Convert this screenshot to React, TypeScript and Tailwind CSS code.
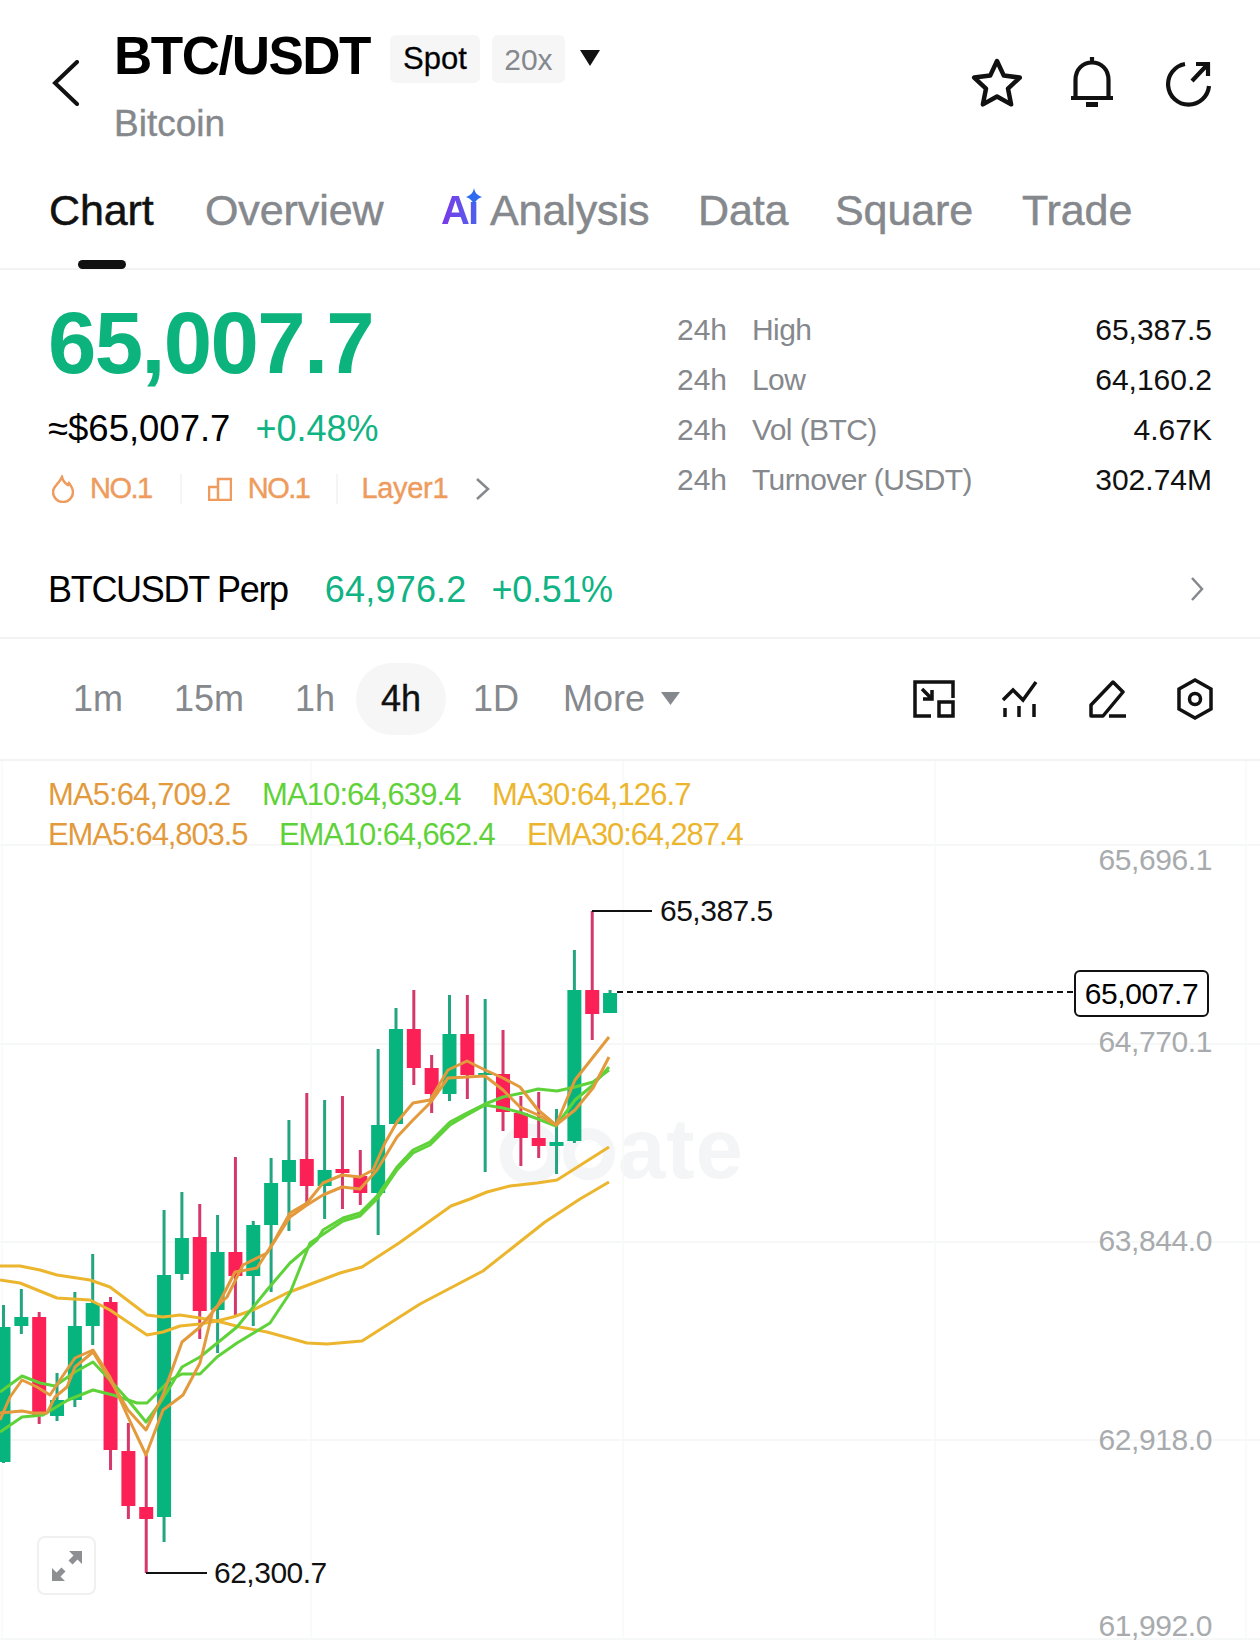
import React from 'react'

type Candle = [top: number, bottom: number, wickTop: number, wickBottom: number, up: boolean]

// body top, body bottom, wick top, wick bottom, green?
const CANDLES: Candle[] = [
  [1327, 1462, 1305, 1463, true],
  [1317, 1326, 1289, 1334, true],
  [1317, 1415, 1312, 1424, false],
  [1400, 1416, 1373, 1421, true],
  [1326, 1400, 1292, 1407, true],
  [1303, 1326, 1254, 1345, true],
  [1302, 1450, 1297, 1470, false],
  [1451, 1506, 1423, 1519, false],
  [1507, 1519, 1455, 1573, false],
  [1275, 1517, 1210, 1542, true],
  [1238, 1274, 1192, 1280, true],
  [1237, 1311, 1204, 1339, false],
  [1252, 1310, 1215, 1353, true],
  [1252, 1276, 1157, 1315, false],
  [1225, 1276, 1221, 1326, true],
  [1183, 1225, 1158, 1292, true],
  [1160, 1182, 1120, 1231, true],
  [1159, 1186, 1093, 1206, false],
  [1170, 1186, 1100, 1219, true],
  [1169, 1173, 1096, 1209, false],
  [1176, 1193, 1150, 1205, false],
  [1125, 1193, 1049, 1235, true],
  [1029, 1124, 1008, 1124, true],
  [1029, 1068, 990, 1085, false],
  [1068, 1094, 1055, 1113, false],
  [1034, 1094, 995, 1101, true],
  [1034, 1075, 995, 1099, false],
  [1073, 1075, 999, 1172, true],
  [1074, 1112, 1030, 1131, false],
  [1113, 1138, 1096, 1166, false],
  [1138, 1146, 1092, 1158, false],
  [1142, 1146, 1109, 1174, true],
  [990, 1141, 950, 1143, true],
  [990, 1014, 911, 1040, false],
  [993, 1013, 990, 1013, true],
]

const LINES: { color: string; points: string }[] = [
  {
    color: '#ecb52e',
    points:
      '0,1266 20,1266 40,1270 57,1275 90,1280 110,1287 147,1315 163,1317 180,1315 200,1318 217,1321 233,1317 253,1310 287,1293 340,1273 362,1267 399,1243 451,1206 470,1199 487,1192 510,1186 537,1183 557,1180 609,1147',
  },
  {
    color: '#ecb52e',
    points:
      '0,1280 20,1283 57,1298 90,1300 110,1310 147,1335 163,1332 180,1326 200,1324 217,1321 240,1327 267,1332 307,1343 327,1344 362,1341 420,1304 483,1271 545,1222 580,1199 609,1182',
  },
  {
    color: '#5fd23a',
    points:
      '0,1392 22,1376 40,1383 55,1386 75,1372 93,1362 110,1380 128,1400 146,1422 160,1403 170,1387 182,1367 200,1357 237,1327 267,1290 290,1263 317,1240 323,1230 343,1218 360,1213 378,1195 397,1167 413,1150 430,1142 450,1122 467,1113 485,1104 503,1097 522,1093 538,1089 557,1091 575,1087 593,1082 609,1070',
  },
  {
    color: '#5fd23a',
    points:
      '0,1432 22,1417 43,1415 68,1400 93,1390 113,1395 137,1403 147,1403 157,1393 170,1380 182,1374 200,1374 217,1357 237,1343 270,1323 290,1293 310,1243 325,1233 343,1221 360,1216 378,1198 397,1170 413,1153 430,1145 450,1125 467,1115 485,1105 503,1108 522,1113 538,1119 556,1126 575,1100 593,1085 609,1067',
  },
  {
    color: '#e39a3c',
    points:
      '0,1413 22,1411 33,1413 47,1413 55,1397 67,1387 75,1367 93,1352 110,1380 128,1410 146,1430 163,1395 182,1342 200,1327 217,1307 235,1272 257,1268 273,1243 290,1213 307,1203 323,1183 342,1175 360,1177 373,1170 385,1143 397,1122 413,1103 430,1100 448,1070 467,1061 485,1070 503,1078 520,1087 538,1110 556,1125 575,1080 609,1037',
  },
  {
    color: '#e39a3c',
    points:
      '0,1420 10,1397 22,1380 37,1387 50,1395 62,1377 75,1358 93,1350 110,1377 128,1417 146,1455 163,1410 183,1395 200,1363 213,1310 227,1297 243,1265 267,1253 290,1217 307,1205 323,1195 342,1187 360,1189 377,1170 397,1137 413,1120 430,1103 448,1078 467,1077 485,1076 503,1090 520,1107 538,1115 556,1125 575,1110 593,1088 609,1057',
  },
]

const GRID_Y = [845, 1044, 1242, 1440, 1639]
const GRID_X = [2, 311, 623, 935, 1246]
const CHART_TOP = 761

const PRICE_LABELS: [string, number][] = [
  ['65,696.1', 860],
  ['64,770.1', 1042],
  ['63,844.0', 1241],
  ['62,918.0', 1440],
  ['61,992.0', 1626],
]

const STATS = [
  ['High', '65,387.5'],
  ['Low', '64,160.2'],
  ['Vol (BTC)', '4.67K'],
  ['Turnover (USDT)', '302.74M'],
]

function ChartDrawing() {
  const shift = (points: string) =>
    points
      .split(' ')
      .map((p) => {
        const [x, y] = p.split(',').map(Number)
        return `${x},${y - CHART_TOP}`
      })
      .join(' ')

  return (
    <svg width="1260" height="884" className="absolute left-0 top-0">
      {GRID_Y.map((y) => (
        <line key={y} x1="0" x2="1260" y1={y - CHART_TOP} y2={y - CHART_TOP} stroke="#f3f4f5" strokeWidth="1.5" />
      ))}
      {GRID_X.map((x) => (
        <line key={x} x1={x} x2={x} y1="0" y2="878" stroke="#f7f8f8" strokeWidth="1.5" />
      ))}
      {/* watermark logo rings, the "ate" part is real text above */}
      <circle cx="530" cy={1154 - CHART_TOP} r="24" fill="none" stroke="#f4f5f6" strokeWidth="13" />
      <circle cx="589" cy={1154 - CHART_TOP} r="20" fill="none" stroke="#f4f5f6" strokeWidth="12" />
      {CANDLES.map(([top, bottom, wickTop, wickBottom, up], i) => {
        const x = 3.5 + i * 17.84
        return (
          <g key={i}>
            <rect x={x - 1.5} y={wickTop - CHART_TOP} width="3" height={wickBottom - wickTop} fill={up ? '#23a580' : '#d5386a'} />
            <rect x={x - 7} y={top - CHART_TOP} width="14" height={bottom - top} fill={up ? '#08b47d' : '#fb2157'} />
          </g>
        )
      })}
      {LINES.map((l, i) => (
        <polyline key={i} points={shift(l.points)} fill="none" stroke={l.color} strokeWidth="3" strokeLinejoin="round" />
      ))}
      {/* high / low leaders and current price */}
      <polyline points={`592,${911 - CHART_TOP} 652,${911 - CHART_TOP}`} fill="none" stroke="#111" strokeWidth="2" />
      <polyline points={`146,${1573 - CHART_TOP} 207,${1573 - CHART_TOP}`} fill="none" stroke="#111" strokeWidth="2" />
      <line x1="617" x2="1074" y1={992 - CHART_TOP} y2={992 - CHART_TOP} stroke="#111" strokeWidth="2" strokeDasharray="6 4" />
    </svg>
  )
}

export default function App() {
  return (
    <div className="w-[1260px] h-[1645px] bg-white overflow-hidden text-black font-['Liberation_Sans',Arial,sans-serif]">
      {/* Header */}
      <div className="flex h-[160px] pl-[52px] pr-[49px]">
        <svg width="28" height="46" viewBox="0 0 28 46" className="mt-[60px]" fill="none" stroke="#111" strokeWidth="4">
          <path d="M25 2 3 23l22 21" strokeLinecap="round" strokeLinejoin="miter" />
        </svg>
        <div className="ml-[34px] pt-[28px]">
          <div className="flex items-start">
            <span className="text-[53px] leading-[56px] font-bold tracking-[-1.5px]">BTC/USDT</span>
            <span className="ml-[20px] mt-[7px] h-[48px] w-[90px] flex items-center justify-center rounded-md bg-[#f6f6f7] text-[31px] [-webkit-text-stroke:0.3px_#111]">Spot</span>
            <span className="ml-[12px] mt-[7px] h-[48px] w-[73px] flex items-center justify-center rounded-md bg-[#f6f6f7] text-[30px] text-[#85888c]">20x</span>
            <svg width="20" height="16" viewBox="0 0 20 16" className="ml-[15px] mt-[22px]">
              <path d="M0 0h20L10 16z" fill="#111" />
            </svg>
          </div>
          <div className="mt-[21px] text-[37px] leading-[38px] text-[#85888c] [-webkit-text-stroke:0.4px_#85888c]">Bitcoin</div>
        </div>
        <div className="ml-auto mt-[58px] flex items-start">
          <svg width="52" height="50" viewBox="0 0 52 50" fill="none" stroke="#111" strokeWidth="4.5" strokeLinejoin="round" className="-ml-[1px]">
            <path d="M26 3l6.8 14.6 16 2-11.800 11 3.100 15.800L26 38.500 11.900 46.400 15 30.600 3.200 19.600l16-2z" />
          </svg>
          <svg width="44" height="52" viewBox="0 0 44 52" fill="none" stroke="#111" strokeWidth="4.2" className="ml-[47px] -mt-[2px]">
            <path d="M22 1v6M5.500 42V24C5.500 13 13 6.500 22 6.500S38.500 13 38.500 24v18M1 42h42" />
            <path d="M16 48.500h12" strokeWidth="5" />
          </svg>
          <svg width="46" height="46" viewBox="0 0 46 46" fill="none" stroke="#111" strokeWidth="4.2" className="ml-[51px] mt-[3px]">
            <path d="M20 3A20.500 20.500 0 1 0 44 25" />
            <path d="M27 20 43 3M31 3h12v12" />
          </svg>
        </div>
      </div>

      {/* Tabs */}
      <div className="flex h-[110px] items-start border-b-[2px] border-[#f2f3f4] pl-[49px] pt-[20px] text-[43px] leading-[60px] tracking-[-0.1px] text-[#85888c] [-webkit-text-stroke:0.5px_#85888c]">
        <div className="relative h-[80px] w-[156px] text-[#111] [-webkit-text-stroke:0.5px_#111]">
          Chart
          <div className="absolute left-[29px] top-[80px] h-[9px] w-[48px] rounded-full bg-[#111]" />
        </div>
        <div className="w-[236px]">Overview</div>
        <div className="relative w-[49px] text-[40px] font-bold tracking-[-2px] bg-gradient-to-r from-[#7a35e8] to-[#2f6bee] bg-clip-text text-transparent [-webkit-text-stroke:0px]">
          Aı
          <svg width="16" height="18" viewBox="0 0 16 18" className="absolute left-[25px] top-[8px]">
            <path d="M8 0c1 5 3 7 8 9-5 2-7 4-8 9-1-5-3-7-8-9 5-2 7-4 8-9z" fill="#2f6bee" />
          </svg>
        </div>
        <div className="w-[208px]">Analysis</div>
        <div className="w-[137px]">Data</div>
        <div className="w-[187px]">Square</div>
        <div>Trade</div>
      </div>

      {/* Price and 24h stats */}
      <div className="flex h-[260px] pl-[48px] pr-[48px]">
        <div className="w-[629px] pt-[28px]">
          <div className="text-[87px] leading-[90px] font-bold tracking-[-1.7px] text-[#0cb37c]">65,007.7</div>
          <div className="mt-[19px] flex text-[36.5px] leading-[44px]">
            <span>≈$65,007.7</span>
            <span className="ml-[25px] text-[36px] text-[#10b383]">+0.48%</span>
          </div>
          <div className="mt-[18px] flex h-[40px] items-center text-[29px] text-[#ee9b5d] [-webkit-text-stroke:0.4px_#ee9b5d]">
            <svg width="22" height="28" viewBox="0 0 22 28" fill="none" stroke="#ee9b5d" strokeWidth="2.500" className="ml-[4px]">
              <path d="M10 2c1 5 3 6 6 8l1-2c3 4 4 7 4 9a10 10 0 0 1-20 0c0-6 6-8 9-15z" />
            </svg>
            <span className="ml-[16px] tracking-[-1.5px]">NO.1</span>
            <div className="ml-[28px] h-[30px] w-[2px] bg-[#f5f5f5]" />
            <svg width="24" height="24" viewBox="0 0 24 24" fill="none" stroke="#ee9b5d" strokeWidth="2.500" className="ml-[26px]">
              <path d="M1 10h9v13H1zM10 2h13v21H10z" />
            </svg>
            <span className="ml-[16px] tracking-[-1.5px]">NO.1</span>
            <div className="ml-[27px] h-[30px] w-[2px] bg-[#f5f5f5]" />
            <span className="ml-[23px] tracking-[-0.3px]">Layer1</span>
            <svg width="15" height="24" viewBox="0 0 15 24" fill="none" stroke="#85888c" strokeWidth="2.500" className="ml-[27px]">
              <path d="M2 2l11 10L2 22" />
            </svg>
          </div>
        </div>
        <div className="flex-1 pt-[34px]">
          {STATS.map(([label, value]) => (
            <div key={label} className="flex h-[50px] items-center text-[30px]">
              <span className="w-[75px] text-[#85888c]">24h</span>
              <span className="tracking-[-0.6px] text-[#85888c]">{label}</span>
              <span className="ml-auto text-[#111]">{value}</span>
            </div>
          ))}
        </div>
      </div>

      {/* Perp row */}
      <div className="flex h-[109px] items-start border-b-[2px] border-[#f2f3f4] pl-[48px] pr-[56px] pt-[38px] text-[36px] leading-[44px]">
        <span className="tracking-[-1.3px]">BTCUSDT Perp</span>
        <span className="ml-[37px] tracking-[0.2px] text-[#10b383]">64,976.2</span>
        <span className="ml-[25px] tracking-[-0.3px] text-[#10b383]">+0.51%</span>
        <svg width="14" height="26" viewBox="0 0 14 26" fill="none" stroke="#85888c" strokeWidth="2.500" className="ml-auto mt-[8px]">
          <path d="M2 2l10 11L2 24" />
        </svg>
      </div>

      {/* Timeframes and tools */}
      <div className="flex h-[122px] items-start border-b-[2px] border-[#f2f3f4] pl-[73px] pr-[47px] pt-[24px] text-[36px] leading-[72px] text-[#85888c]">
        <span className="w-[101px]">1m</span>
        <span className="w-[121px]">15m</span>
        <span className="w-[61px]">1h</span>
        <span className="flex h-[72px] w-[90px] items-center justify-center rounded-full bg-[#f6f6f7] text-[#111] [-webkit-text-stroke:0.4px_#111]">4h</span>
        <span className="ml-[27px] w-[90px]">1D</span>
        <span>More</span>
        <svg width="19" height="13" viewBox="0 0 19 13" className="ml-[16px] mt-[29px]">
          <path d="M0 0h19L9.500 13z" fill="#85888c" />
        </svg>
        <div className="ml-auto flex mt-[17px] items-start">
          <svg width="42" height="38" viewBox="0 0 42 38" fill="none" stroke="#111" strokeWidth="3.500">
            <path d="M18 36H2V2h38v16" />
            <path d="M26 22h14v14H26zM9 9l10 10M19 10v9h-9" />
          </svg>
          <svg width="36" height="38" viewBox="0 0 36 38" fill="none" stroke="#111" strokeWidth="3.500" className="ml-[47px]">
            <path d="M1 20l10-10 10 10L34 2M3 28v9M17 26v11M32 24v13" />
          </svg>
          <svg width="38" height="38" viewBox="0 0 38 38" fill="none" stroke="#111" strokeWidth="3.500" strokeLinejoin="round" className="ml-[51px]">
            <path d="M24 2l10 10-20 24H2V25zM20 36h17" />
          </svg>
          <svg width="36" height="42" viewBox="0 0 36 42" fill="none" stroke="#111" strokeWidth="3.500" className="ml-[50px] -mt-[2px]">
            <path d="M18 2l16 9v20l-16 9-16-9V11z" />
            <circle cx="18" cy="21" r="5.500" />
          </svg>
        </div>
      </div>

      {/* Chart */}
      <div className="relative h-[884px]">
        <div className="absolute left-[618px] top-[345px] text-[85px] leading-[85px] tracking-[1px] font-bold text-[#f4f5f6]">ate</div>
        <ChartDrawing />

        <div className="relative pl-[48px] pt-[14px] text-[31px] leading-[40px] tracking-[-0.9px]">
          <div className="flex">
            <span className="w-[214px] text-[#e39a3c]">MA5:64,709.2</span>
            <span className="w-[230px] text-[#5fd23a]">MA10:64,639.4</span>
            <span className="text-[#ecb52e]">MA30:64,126.7</span>
          </div>
          <div className="flex">
            <span className="w-[231px] tracking-[-1.1px] text-[#e39a3c]">EMA5:64,803.5</span>
            <span className="w-[248px] tracking-[-1.1px] text-[#5fd23a]">EMA10:64,662.4</span>
            <span className="tracking-[-1.1px] text-[#ecb52e]">EMA30:64,287.4</span>
          </div>
        </div>

        {PRICE_LABELS.map(([text, y]) => (
          <span
            key={text}
            className="absolute right-[48px] text-[30px] leading-[36px] tracking-[-0.4px] text-[#a8abae]"
            style={{ top: y - CHART_TOP - 18 }}
          >
            {text}
          </span>
        ))}

        <span className="absolute left-[660px] top-[132px] text-[30px] leading-[36px] tracking-[-0.5px] text-[#111]">65,387.5</span>
        <span className="absolute left-[214px] top-[794px] text-[30px] leading-[36px] tracking-[-0.5px] text-[#111]">62,300.7</span>

        <div className="absolute left-[1074px] top-[209px] flex h-[47px] w-[135px] items-center justify-center rounded-md border-[2px] border-[#111] bg-white text-[30px] tracking-[-0.4px]">
          65,007.7
        </div>

        <div className="absolute left-[37px] top-[775px] flex h-[59px] w-[59px] items-center justify-center rounded-lg border-[2px] border-[#f0f0f1] bg-white">
          <svg width="30" height="30" viewBox="0 0 30 30" fill="#8d8f93">
            <path d="M30 0v13l-4.500-4.500-5 5-4-4 5-5L17 0zM0 30V17l4.500 4.500 5-5 4 4-5 5L13 30z" />
          </svg>
        </div>
      </div>
    </div>
  )
}
